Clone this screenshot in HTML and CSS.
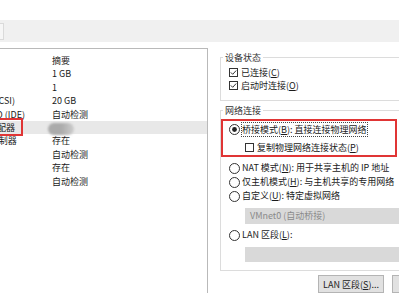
FILE: index.html
```html
<!DOCTYPE html>
<html lang="zh-CN">
<head>
  <meta charset="UTF-8" />
  <title>虚拟机设置</title>
  <link rel="stylesheet" href="styles.css">
</head>
<body>

<div class="top-space"></div>

<!-- 工具栏 -->
<div class="toolbar"><span class="tool-btn"></span></div>

<div class="main">
  <!-- 硬件列表 -->
  <div class="device-list">
    <div class="row"><span class="name">设备</span><span class="summary">摘要</span></div>
    <div class="row"><span class="name">内存</span><span class="summary">1 GB</span></div>
    <div class="row"><span class="name">处理器</span><span class="summary">1</span></div>
    <div class="row"><span class="name">硬盘 (SCSI)</span><span class="summary">20 GB</span></div>
    <div class="row"><span class="name">CD/DVD (IDE)</span><span class="summary">自动检测</span></div>
    <div class="row selected">
      <span class="name">网络适配器</span><span class="summary"><span class="blur"></span></span>
      <span class="mark"></span>
    </div>
    <div class="row"><span class="name">USB 控制器</span><span class="summary">存在</span></div>
    <div class="row"><span class="name">声卡</span><span class="summary">自动检测</span></div>
    <div class="row"><span class="name">打印机</span><span class="summary">存在</span></div>
    <div class="row"><span class="name">显示器</span><span class="summary">自动检测</span></div>
  </div>

  <!-- 右侧设置 -->
  <div class="settings">
    <fieldset class="group status">
      <legend>设备状态</legend>
      <div class="opt first">
        <svg class="check" width="9" height="9" viewBox="0 0 9 9"><rect x="0.5" y="0.5" width="8" height="8" fill="#fff" stroke="#333"/><path d="M1.8 4.4 L3.7 6.3 L7.2 2.5" fill="none" stroke="#333" stroke-width="1"/></svg>
        <span>已连接(<u>C</u>)</span>
      </div>
      <div class="opt">
        <svg class="check" width="9" height="9" viewBox="0 0 9 9"><rect x="0.5" y="0.5" width="8" height="8" fill="#fff" stroke="#333"/><path d="M1.8 4.4 L3.7 6.3 L7.2 2.5" fill="none" stroke="#333" stroke-width="1"/></svg>
        <span>启动时连接(<u>O</u>)</span>
      </div>
    </fieldset>

    <fieldset class="group network">
      <legend>网络连接</legend>
      <div class="bridge">
        <div class="opt">
          <svg class="radio" width="11" height="11" viewBox="0 0 11 11"><circle cx="5.5" cy="5.5" r="5" fill="#fff" stroke="#333"/><circle cx="5.5" cy="5.5" r="2.4" fill="#222"/></svg>
          <span class="focus">桥接模式(<u>B</u>): 直接连接物理网络</span>
        </div>
        <div class="opt sub">
          <svg class="check" width="9" height="9" viewBox="0 0 9 9"><rect x="0.5" y="0.5" width="8" height="8" fill="#fff" stroke="#333"/></svg>
          <span>复制物理网络连接状态(<u>P</u>)</span>
        </div>
      </div>
      <div class="opt wide nat">
        <svg class="radio" width="11" height="11" viewBox="0 0 11 11"><circle cx="5.5" cy="5.5" r="5" fill="#fff" stroke="#333"/></svg>
        <span>NAT 模式(<u>N</u>): 用于共享主机的 IP 地址</span>
      </div>
      <div class="opt wide">
        <svg class="radio" width="11" height="11" viewBox="0 0 11 11"><circle cx="5.5" cy="5.5" r="5" fill="#fff" stroke="#333"/></svg>
        <span>仅主机模式(<u>H</u>): 与主机共享的专用网络</span>
      </div>
      <div class="opt wide">
        <svg class="radio" width="11" height="11" viewBox="0 0 11 11"><circle cx="5.5" cy="5.5" r="5" fill="#fff" stroke="#333"/></svg>
        <span>自定义(<u>U</u>): 特定虚拟网络</span>
      </div>
      <div class="select">VMnet0 (自动桥接)</div>
      <div class="opt wide lan">
        <svg class="radio" width="11" height="11" viewBox="0 0 11 11"><circle cx="5.5" cy="5.5" r="5" fill="#fff" stroke="#333"/></svg>
        <span>LAN 区段(<u>L</u>):</span>
      </div>
      <div class="select empty"></div>
    </fieldset>

    <div class="buttons">
      <button>LAN 区段(<u>S</u>)...</button>
      <button>高级(<u>V</u>)...</button>
    </div>
  </div>
</div>

</body>
</html>
```

FILE: styles.css
```css
* {
  margin: 0;
  padding: 0;
  box-sizing: border-box;
}

body {
  width: 399px;
  height: 300px;
  overflow: hidden;
  background: #fff;
  font-family: "Noto Sans CJK SC", "Noto Sans", sans-serif;
  font-size: 9px;
  color: #1a1a1a;
}

.top-space {
  height: 20px;
}

.toolbar {
  height: 22px;
  background: #f0f0f0;
  padding-top: 3px;
}

.tool-btn {
  display: block;
  width: 5px;
  height: 17px;
  margin-left: -1px;
  border: 1px solid #dadada;
  background: #f6f6f6;
}

.main {
  display: flex;
  margin-top: 6px;
  height: 245px;
}

/* 硬件列表 */
.device-list {
  width: 208px;
  flex-shrink: 0;
  border-top: 1px solid #b9b9b9;
  border-right: 1px solid #b9b9b9;
  overflow: hidden;
  padding-top: 5px;
}

.row {
  display: flex;
  height: 13.4px;
  line-height: 13.4px;
  position: relative;
  white-space: nowrap;
}

.row.selected {
  background: #e8e8e8;
}

.name {
  width: 82px;
  margin-left: -30px;
  flex-shrink: 0;
}

.blur {
  display: inline-block;
  width: 26px;
  height: 12px;
  margin-left: -4px;
  vertical-align: middle;
  border-radius: 6px;
  background: linear-gradient(to right, #ababab 50%, #cdcdcd);
  filter: blur(1px);
}

.mark {
  position: absolute;
  left: -3px;
  top: -3px;
  width: 26px;
  height: 18px;
  border: 2px solid #e03535;
}

/* 右侧设置 */
.settings {
  width: 262px;
  flex-shrink: 0;
  padding: 0 12px;
  overflow: hidden;
}

.group {
  border: 1px solid #dcdcdc;
  padding: 0 0 0 8px;
}

.group legend {
  margin-left: -6px;
  padding: 0 2px;
  line-height: 13px;
  color: #333;
}

.status {
  margin-top: 2.5px;
  padding-bottom: 8px;
}

.network {
  margin-top: 3px;
  padding-bottom: 7.5px;
}

.opt {
  display: flex;
  align-items: center;
  height: 13px;
  line-height: 13px;
  white-space: nowrap;
}

.opt.first {
  margin-top: 2px;
}

.opt .check {
  margin-right: 3px;
}

.opt .radio {
  margin-right: 2px;
}

.bridge {
  width: 176px;
  margin: 2.5px 0 0 -8px;
  padding: 1.5px 0 1.5px 6px;
  border: 2px solid #e03535;
}

.bridge .sub {
  margin-top: 5px;
  padding-left: 16px;
}

.focus {
  outline: 1px dotted #444;
}

.opt.wide {
  height: 14px;
  line-height: 14px;
}

.opt.nat {
  margin-top: 4px;
}

.select {
  margin: 5px 0 0 16px;
  height: 16px;
  line-height: 16px;
  padding-left: 5px;
  background: #d9d9d9;
  color: #8a8a8a;
}

.opt.lan {
  margin-top: 4px;
}

.select.empty {
  height: 15px;
}

.buttons {
  display: flex;
  justify-content: flex-end;
  gap: 8px;
  margin-top: 4.5px;
}

.buttons button {
  width: 66px;
  height: 18px;
  font-family: inherit;
  font-size: 9px;
  color: #222;
  background: #e1e1e1;
  border: 1px solid #b4b4b4;
}
```
